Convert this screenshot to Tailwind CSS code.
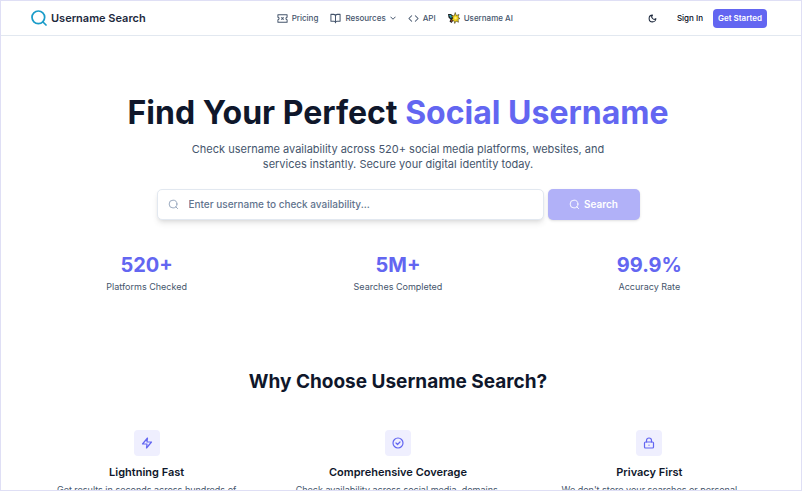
<!DOCTYPE html>
<html lang="en">
<head>
    <meta charset="UTF-8">
    <meta name="viewport" content="width=device-width, initial-scale=1.0">
    <title>Username Search</title>
    <script src="https://cdn.jsdelivr.net/npm/@tailwindcss/browser@4"></script>
</head>
<body class="font-['Inter',sans-serif] bg-white text-gray-900">

    <div class="h-screen border border-[#dfdff5] overflow-y-auto [scrollbar-width:none]">

        <!-- Header -->
        <header class="border-b border-slate-200 pl-[30px] pr-[34px] h-[35px] flex items-center justify-between">
            <a href="#" class="flex items-center gap-1 text-[11px] font-semibold text-slate-800">
                <svg class="size-4 text-[#1a9cc9]" viewBox="0 0 24 24" fill="none" stroke="currentColor" stroke-width="2.6" stroke-linecap="round"><circle cx="11" cy="11" r="9.5"/><path d="m18 18 4.5 4.5"/></svg>
                Username Search
            </a>

            <nav class="mr-1 flex items-center gap-3 text-[8px] font-medium text-slate-600">
                <a href="#" class="flex items-center gap-1">
                    <svg class="size-[11px]" viewBox="0 0 24 24" fill="none" stroke="currentColor" stroke-width="2.2" stroke-linejoin="round"><path d="M2 9.5a2.5 2.5 0 0 1 0 5V20h20v-5.5a2.5 2.5 0 0 1 0-5V4H2Z"/><path d="m9.5 9.5 5 5M14.5 9.5l-5 5"/></svg>
                    Pricing
                </a>
                <button type="button" class="flex items-center gap-1">
                    <svg class="size-[11px]" viewBox="0 0 24 24" fill="none" stroke="currentColor" stroke-width="2.2" stroke-linecap="round" stroke-linejoin="round"><path d="M12 7v14M2 3h6a4 4 0 0 1 4 4 4 4 0 0 1 4-4h6v15h-7a3 3 0 0 0-3 3 3 3 0 0 0-3-3H2z"/></svg>
                    Resources
                    <svg class="size-[6px]" viewBox="0 0 24 24" fill="none" stroke="currentColor" stroke-width="4" stroke-linecap="round" stroke-linejoin="round"><path d="m3 8 9 9 9-9"/></svg>
                </button>
                <a href="#" class="flex items-center gap-1">
                    <svg class="size-[11px]" viewBox="0 0 24 24" fill="none" stroke="currentColor" stroke-width="2.2" stroke-linecap="round" stroke-linejoin="round"><path d="m16 18 6-6-6-6M8 6l-6 6 6 6"/></svg>
                    API
                </a>
                <a href="#" class="flex items-center gap-1">
                    <svg class="size-3" viewBox="0 0 24 24"><path d="M0 4h6l4 3v11l-3 4-4-3 2-4-4-4z" fill="#1c2326"/><path d="M2 6h4l3 4-4 2z" fill="#2a9db0"/><path d="M5 17l4-2-1 5z" fill="#c63a35"/><path d="m14.500 1 2 6L22 5l-2 5.500 4 2.500-4 1.500 1 6-5-2.500-2.500 5-1.500-5.500-5-1 3-4.500L7 7l5 1z" fill="#f0d21c" stroke="#1f1c10" stroke-width="1"/><circle cx="15" cy="12" r="2.500" fill="#fff27a"/></svg>
                    Username AI
                </a>
            </nav>

            <div class="flex items-center text-[8px] font-semibold text-slate-800">
                <button type="button" aria-label="Toggle dark mode" class="mr-5">
                    <svg class="size-[9px]" viewBox="0 0 24 24" fill="none" stroke="currentColor" stroke-width="2.8" stroke-linecap="round" stroke-linejoin="round"><path d="M12 3a6 6 0 0 0 9 9 9 9 0 1 1-9-9Z"/></svg>
                </button>
                <a href="#" class="mr-[10px] font-medium text-slate-950">Sign In</a>
                <a href="#" class="bg-[#6366f1] text-white rounded px-[5px] h-[19px] flex items-center">Get Started</a>
            </div>
        </header>

        <main class="pl-5 pr-[26px] text-center">

            <!-- Hero -->
            <section class="pt-14">
                <h1 class="text-[32px] leading-[42px] font-bold text-slate-900">Find Your Perfect <span class="text-[#6366f1]">Social Username</span></h1>
                <p class="mt-2 mx-auto max-w-[430px] text-[11px] leading-[15px] text-slate-600">Check username availability across 520+ social media platforms, websites, and services instantly. Secure your digital identity today.</p>

                <form class="mt-[17px] mx-auto max-w-[483px] flex gap-1">
                    <label class="flex-1 h-[31px] flex items-center gap-[10px] px-[10px] bg-white border border-slate-200 rounded-[5px] shadow-md">
                        <svg class="size-[11px] text-slate-400" viewBox="0 0 24 24" fill="none" stroke="currentColor" stroke-width="2" stroke-linecap="round"><circle cx="11" cy="11" r="8.5"/><path d="m21 21-4-4"/></svg>
                        <input type="text" aria-label="Username" placeholder="Enter username to check availability..." class="flex-1 min-w-0 text-[10px] font-medium outline-none placeholder:text-slate-500">
                    </label>
                    <button type="submit" class="w-[92px] flex items-center justify-center gap-1 bg-[#b1b1f8] text-white text-[10px] font-semibold rounded-[5px] shadow-sm">
                        <svg class="size-[11px]" viewBox="0 0 24 24" fill="none" stroke="currentColor" stroke-width="2" stroke-linecap="round"><circle cx="11" cy="11" r="8.5"/><path d="m21 21-4-4"/></svg>
                        Search
                    </button>
                </form>
            </section>

            <!-- Stats -->
            <section class="mt-[31px] grid grid-cols-3 text-[9px] text-slate-600">
                <div>
                    <p class="text-[20px] leading-7 font-bold text-[#6366f1]">520+</p>
                    <p class="leading-4">Platforms Checked</p>
                </div>
                <div>
                    <p class="text-[20px] leading-7 font-bold text-[#6366f1]">5M+</p>
                    <p class="leading-4">Searches Completed</p>
                </div>
                <div>
                    <p class="text-[20px] leading-7 font-bold text-[#6366f1]">99.9%</p>
                    <p class="leading-4">Accuracy Rate</p>
                </div>
            </section>

            <!-- Features -->
            <section class="mt-[73px]">
                <h2 class="text-[19px] leading-7 font-bold text-slate-900">Why Choose Username Search?</h2>
                <div class="mt-[34px] grid grid-cols-3 text-[9px] leading-[13px] text-slate-600">
                    <div class="flex flex-col items-center">
                        <div class="size-[26px] rounded bg-[#efeffe] text-[#6366f1] flex items-center justify-center">
                            <svg class="size-3" viewBox="0 0 24 24" fill="none" stroke="currentColor" stroke-width="2.4" stroke-linecap="round" stroke-linejoin="round"><path d="M13 2 3 14h9l-1 8 10-12h-9l1-8z"/></svg>
                        </div>
                        <h3 class="mt-2 text-[11px] leading-4 font-semibold text-slate-900">Lightning Fast</h3>
                        <p class="mt-[3px] max-w-[210px]">Get results in seconds across hundreds of platforms simultaneously.</p>
                    </div>
                    <div class="flex flex-col items-center">
                        <div class="size-[26px] rounded bg-[#efeffe] text-[#6366f1] flex items-center justify-center">
                            <svg class="size-3" viewBox="0 0 24 24" fill="none" stroke="currentColor" stroke-width="2.4" stroke-linecap="round" stroke-linejoin="round"><circle cx="12" cy="12" r="10"/><path d="m8 12 3 3 5-5"/></svg>
                        </div>
                        <h3 class="mt-2 text-[11px] leading-4 font-semibold text-slate-900">Comprehensive Coverage</h3>
                        <p class="mt-[3px] max-w-[210px]">Check availability across social media, domains, and professional networks.</p>
                    </div>
                    <div class="flex flex-col items-center">
                        <div class="size-[26px] rounded bg-[#efeffe] text-[#6366f1] flex items-center justify-center">
                            <svg class="size-3" viewBox="0 0 24 24" fill="none" stroke="currentColor" stroke-width="2.4" stroke-linecap="round" stroke-linejoin="round"><rect x="3" y="10" width="18" height="12" rx="2"/><path d="M7 10V7a5 5 0 0 1 10 0v3M12 16v.5"/></svg>
                        </div>
                        <h3 class="mt-2 text-[11px] leading-4 font-semibold text-slate-900">Privacy First</h3>
                        <p class="mt-[3px] max-w-[210px]">We don't store your searches or personal information.</p>
                    </div>
                </div>
            </section>
        </main>
    </div>

</body>
</html>
